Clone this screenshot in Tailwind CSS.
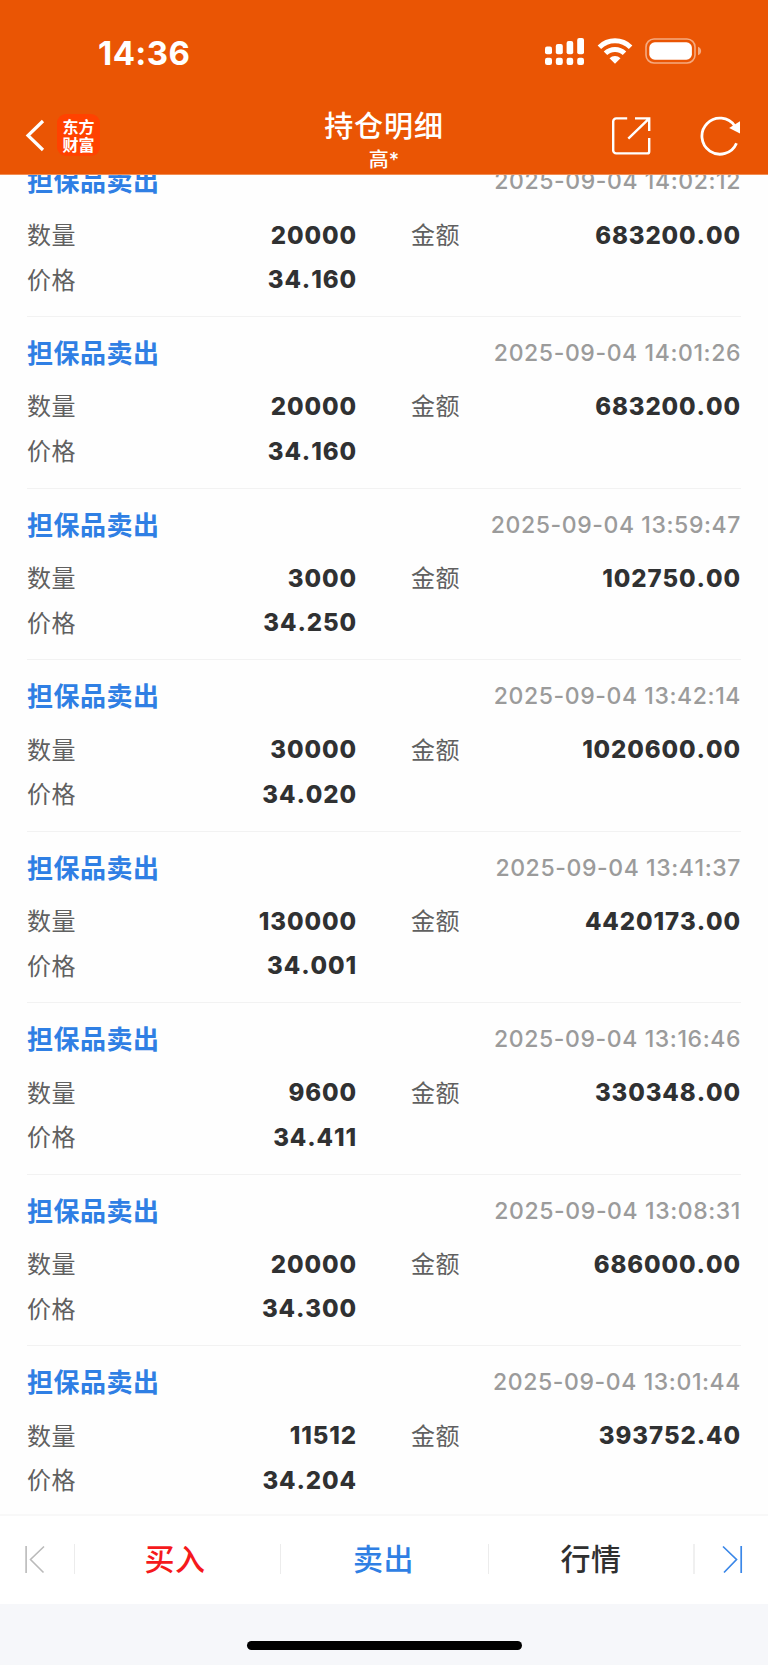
<!DOCTYPE html>
<html lang="zh-CN">
<head>
<meta charset="utf-8">
<title>持仓明细</title>
<script src="https://cdn.jsdelivr.net/npm/@tailwindcss/browser@4"></script>
</head>
<body class="bg-white font-['Inter','Noto_Sans_CJK_SC',sans-serif]">
<div class="flex h-[1665px] w-[768px] flex-col overflow-hidden bg-[#fefefe]">
  <header class="flex h-[175px] shrink-0 flex-col border-b border-[#f28d52] bg-[#ea5504] text-white">
    <div class="flex h-[104px] shrink-0 items-center justify-between pl-[98px] pr-[66px]">
      <span class="pt-[2px] text-[33px] leading-none font-bold tracking-[0.4px]">14:36</span>
      <div class="flex items-center pb-[2px]">
        <svg class="block h-[28px] w-[40px]" viewBox="0 0 40 28" fill="#fff">
          <rect x="1" y="9.5" width="7" height="7.8" rx="2"/><rect x="11.8" y="7" width="7" height="10.3" rx="2"/><rect x="22.6" y="4" width="6.6" height="13.3" rx="2"/><rect x="33.2" y="1" width="6.8" height="16.3" rx="2"/>
          <rect x="1" y="20.8" width="7" height="7.2" rx="2.2"/><rect x="11.8" y="20.8" width="7" height="7.2" rx="2.2"/><rect x="22.6" y="20.8" width="6.6" height="7.2" rx="2.2"/><rect x="33.2" y="20.8" width="6.8" height="7.2" rx="2.2"/>
        </svg>
        <svg class="ml-[13px] block h-[26px] w-[36px]" viewBox="0 0 36 26" fill="none" stroke="#fff" stroke-width="5">
          <path d="M2.4 9.2a22.2 22.2 0 0 1 31.2 0"/><path d="M8.5 15.3a13.6 13.6 0 0 1 19 0"/><path d="M12.5 20.2a8 8 0 0 1 11 0L18 25.7z" fill="#fff" stroke="none"/>
        </svg>
        <svg class="ml-[12px] block h-[26px] w-[57px]" viewBox="0 0 57 26">
          <rect x="1" y="1" width="49" height="24" rx="8" fill="none" stroke="#f5aa80" stroke-width="1.6"/><rect x="4.3" y="4.3" width="42.6" height="17.4" rx="5.5" fill="#fff"/><path d="M53 8.8c4.2 1.6 4.2 6.8 0 8.4z" fill="#f5aa80"/>
        </svg>
      </div>
    </div>
    <div class="grid h-[70px] grid-cols-[1fr_auto_1fr]">
      <div class="flex items-start pt-[10px] pl-[24px]">
        <svg class="mt-[5px] block h-[33px] w-[22px]" viewBox="0 0 22 33" fill="none" stroke="#fff" stroke-width="3.2"><path d="M19 2 4 16.5 19 31"/></svg>
        <div class="ml-[11px] flex h-[42px] w-[43px] flex-col items-center justify-center rounded-[9px] bg-[#ff4200] pb-px font-['Noto_Sans_CJK_SC',sans-serif] text-[16px] leading-[18px] font-bold"><span>东方</span><span>财富</span></div>
      </div>
      <div class="flex flex-col items-center font-['Noto_Sans_CJK_SC',sans-serif] font-medium">
        <h1 class="mt-[2px] h-[36px] text-[29px] leading-[36px] tracking-[0.9px]">持仓明细</h1>
        <span class="mt-[5px] text-[20px] leading-[24px]">高<span class="font-['Inter']">*</span></span>
      </div>
      <div class="flex items-start justify-end pt-[12px] pr-[26px]">
        <svg class="block h-[40px] w-[40px]" viewBox="0 0 40 40" fill="none" stroke="#fff" stroke-width="2.4"><path d="M16.2 2.4H5.2a3 3 0 0 0-3 3v29a3 3 0 0 0 3 3h31a2 2 0 0 0 2-2V22"/><path d="M24 2.4h14.2V15M38 2.6 17.3 22.7"/></svg>
        <svg class="ml-[49px] block h-[40px] w-[42px]" viewBox="0 0 42 40" fill="none" stroke="#fff" stroke-width="2.8"><path d="M36.5 27.2A18 18 0 1 1 34.8 10"/><path d="M40 5.3v12.2L29.2 12z" fill="#fff" stroke="none"/></svg>
      </div>
    </div>
  </header>

  <main class="h-[1339px] shrink-0 overflow-hidden px-[27px]">
    <div id="trades" class="-mt-[29.6px]"></div>
  </main>

  <nav class="flex h-[90px] shrink-0 items-center border-t-2 border-[#f8f8f8] bg-white pb-[2px] font-['Noto_Sans_CJK_SC',sans-serif] text-[30px] font-medium">
    <div class="flex w-[75px] justify-start border-r border-[#ececec] pl-[25px]">
      <svg class="block h-[30px] w-[21px]" viewBox="0 0 21 30" fill="none" stroke="#bababa" stroke-width="1.6"><path d="M1.1 2v27M19 2.5 5.5 15.5 18.5 28.5"/></svg>
    </div>
    <div class="flex h-[30px] w-[206px] items-center justify-center border-r border-[#ececec] pr-[5px] pb-[3px] tracking-[0.6px] text-[#f5191c]">买入</div>
    <div class="flex h-[30px] w-[208px] items-center justify-center border-r border-[#ececec] pr-[2px] pb-[3px] tracking-[0.6px] text-[#2f7fe4]">卖出</div>
    <div class="flex h-[30px] w-[206px] items-center justify-center border-r-2 border-[#f0f0f0] pb-[3px] tracking-[0.6px] text-[#303030]">行情</div>
    <div class="flex flex-1 justify-start pl-[26px]">
      <svg class="block h-[30px] w-[22px]" viewBox="0 0 22 30" fill="none" stroke="#3a87e8" stroke-width="1.7"><path d="M20.2 2v27M2 2.5 15.5 15.5 3 28.5"/></svg>
    </div>
  </nav>
  <footer class="flex flex-1 justify-center bg-[#f6f7fa] pt-[37px]">
    <div class="h-[9px] w-[275px] rounded-full bg-black"></div>
  </footer>
</div>

<template id="trade">
  <article class="h-[171.55px] border-b border-[#f2f2f2] pt-[18px]">
    <div class="flex h-[34px] items-center justify-between">
      <h2 class="font-['Noto_Sans_CJK_SC',sans-serif] text-[26px] leading-[34px] font-bold tracking-[0.5px] text-[#2f7fe4]">担保品卖出</h2>
      <time class="pt-[2px] text-[23px] leading-[34px] font-medium tracking-[0.6px] [font-kerning:none] text-[#9b9b9b]"></time>
    </div>
    <dl class="mt-[14.5px] grid grid-cols-[330px_330px] justify-between text-[24px] leading-[44.5px]">
      <div class="flex justify-between"><dt class="font-['Noto_Sans_CJK_SC',sans-serif] tracking-[0.4px] text-[#606060]">数量</dt><dd class="pt-[1.6px] font-extrabold tracking-[0.9px] [font-kerning:none] text-[#303132]" data-f="1"></dd></div>
      <div class="flex justify-between"><dt class="font-['Noto_Sans_CJK_SC',sans-serif] tracking-[0.4px] text-[#606060]">金额</dt><dd class="pt-[1.6px] font-extrabold tracking-[0.9px] [font-kerning:none] text-[#303132]" data-f="2"></dd></div>
      <div class="-mt-[1.5px] flex justify-between"><dt class="font-['Noto_Sans_CJK_SC',sans-serif] tracking-[0.4px] text-[#606060]">价格</dt><dd class="pt-[1.6px] font-extrabold tracking-[0.9px] [font-kerning:none] text-[#303132]" data-f="3"></dd></div>
    </dl>
  </article>
</template>
<script>
const trades = [
  ['14:02:12', '20000', '683200.00', '34.160'],
  ['14:01:26', '20000', '683200.00', '34.160'],
  ['13:59:47', '3000', '102750.00', '34.250'],
  ['13:42:14', '30000', '1020600.00', '34.020'],
  ['13:41:37', '130000', '4420173.00', '34.001'],
  ['13:16:46', '9600', '330348.00', '34.411'],
  ['13:08:31', '20000', '686000.00', '34.300'],
  ['13:01:44', '11512', '393752.40', '34.204']
];
const list = document.getElementById('trades');
for (const t of trades) {
  const row = document.getElementById('trade').content.cloneNode(true);
  row.querySelector('time').textContent = '2025-09-04 ' + t[0];
  row.querySelectorAll('[data-f]').forEach(e => { e.textContent = t[e.dataset.f]; });
  list.appendChild(row);
}
</script>
</body>
</html>
